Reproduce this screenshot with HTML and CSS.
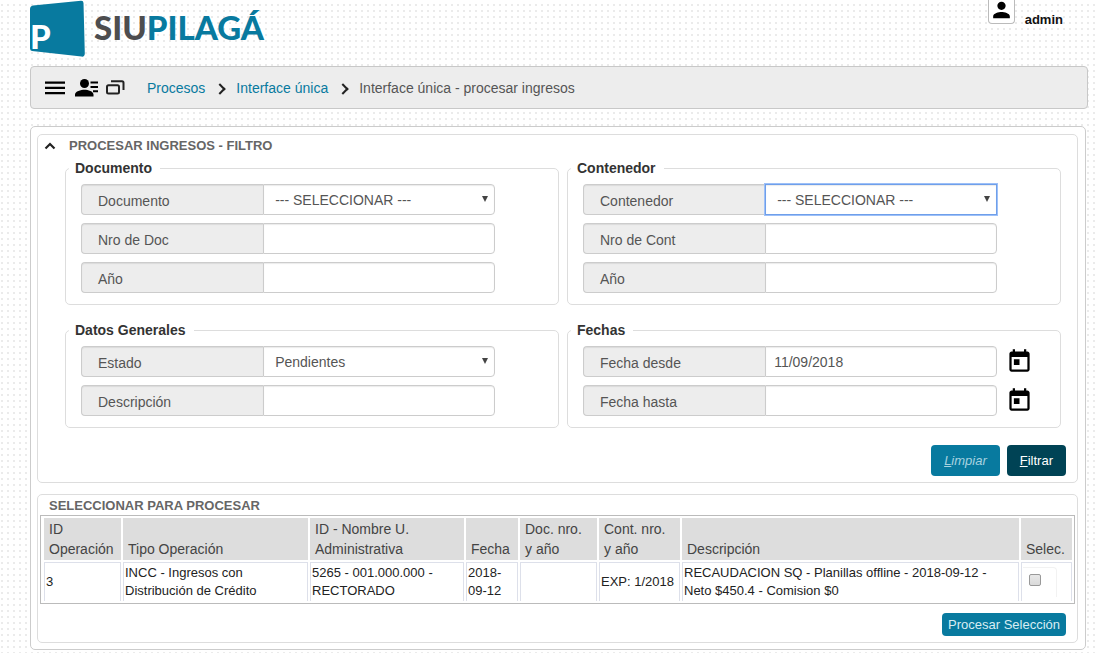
FILE: index.html
```html
<!DOCTYPE html>
<html lang="es">
<head>
<meta charset="utf-8">
<meta name="viewport" content="width=device-width, initial-scale=1">
<title>SIU Pilagá - Procesar ingresos</title>
<link rel="stylesheet" href="styles.css">
</head>
<body>
<header class="header">
  <div class="brand">
    <svg class="brand-mark" viewBox="0 0 56 58" aria-hidden="true">
      <path d="M3 5.5 L51 .7 Q53.5 .6 53.5 3 L54.8 53.5 Q54.8 57 51.500 56.600 L2 51 Q0 50.500 0 48.500 V9 Q0 6 3 5.500Z" fill="#087a9f"/>
      <text class="brand-letter" x="0" y="49">P</text>
    </svg>
    <span class="brand-name">SIU<span class="brand-product">PILAGÁ</span></span>
  </div>
  <div class="user">
    <button class="user-button" type="button" aria-label="Usuario">
      <svg width="26" height="26" viewBox="0 0 24 24"><path d="M12 12c2.210 0 4-1.790 4-4s-1.790-4-4-4-4 1.790-4 4 1.790 4 4 4zm0 2c-2.670 0-8 1.340-8 4v2h16v-2c0-2.660-5.330-4-8-4z"/></svg>
    </button>
    <span class="user-name">admin</span>
  </div>
</header>

<nav class="navbar" aria-label="Principal">
  <div class="tools">
    <button class="tool" type="button" aria-label="Menú">
      <svg width="20" height="20" viewBox="0 0 20 20"><path d="M0 3.500h20v2.300H0zM0 8.800h20v2.300H0zM0 14h20v2.300H0z"/></svg>
    </button>
    <button class="tool" type="button" aria-label="Perfiles">
      <svg width="24" height="20" viewBox="0 0 24 20"><circle cx="9.500" cy="5.500" r="4.500"/><path d="M0 18.500v-2c0-3.300 6-4.800 9.500-4.800s9 1.500 9 4.800v2zM15.500 3.500h7.500v2h-7.500zM15.500 8h7.500v2h-7.500zM18 12.300h5v2h-5z"/></svg>
    </button>
    <button class="tool" type="button" aria-label="Ventanas">
      <svg width="20" height="20" viewBox="0 0 20 20"><path d="M3.500 7.300h9q1.500 0 1.500 1.500v5.200q0 1.500-1.500 1.500h-9Q2 15.500 2 14v-5.200q0-1.500 1.500-1.500zM6 3.300h11q1.500 0 1.500 1.500V12" fill="none" stroke="#222" stroke-width="2"/></svg>
    </button>
  </div>
  <ol class="crumbs">
    <li class="crumb"><a class="crumb-link" href="#procesos">Procesos</a></li>
    <li class="crumb"><a class="crumb-link" href="#interface">Interface única</a></li>
    <li class="crumb" aria-current="page">Interface única - procesar ingresos</li>
  </ol>
</nav>

<main class="content">
  <form class="panel filter">
    <div class="panel-head">
      <button class="collapse" type="button" aria-label="Contraer filtro">
        <svg width="12" height="12" viewBox="0 0 12 12"><path d="M1.500 8.500 6 4l4.500 4.500" fill="none" stroke="#222" stroke-width="2.200"/></svg>
      </button>
      <h1 class="panel-title">PROCESAR INGRESOS - FILTRO</h1>
    </div>
    <div class="groups">
      <fieldset class="group">
        <legend class="legend">Documento</legend>
        <div class="rows">
          <div class="row"><div class="field"><label class="label" for="doc">Documento</label><select class="control select" id="doc"><option>--- SELECCIONAR ---</option></select></div></div>
          <div class="row"><div class="field"><label class="label" for="doc-nro">Nro de Doc</label><input class="control" id="doc-nro" type="text"></div></div>
          <div class="row"><div class="field"><label class="label" for="doc-anio">Año</label><input class="control" id="doc-anio" type="text"></div></div>
        </div>
      </fieldset>
      <fieldset class="group">
        <legend class="legend">Contenedor</legend>
        <div class="rows">
          <div class="row"><div class="field"><label class="label" for="cont">Contenedor</label><select class="control select is-active" id="cont"><option>--- SELECCIONAR ---</option></select></div></div>
          <div class="row"><div class="field"><label class="label" for="cont-nro">Nro de Cont</label><input class="control" id="cont-nro" type="text"></div></div>
          <div class="row"><div class="field"><label class="label" for="cont-anio">Año</label><input class="control" id="cont-anio" type="text"></div></div>
        </div>
      </fieldset>
      <fieldset class="group">
        <legend class="legend">Datos Generales</legend>
        <div class="rows">
          <div class="row"><div class="field"><label class="label" for="estado">Estado</label><select class="control select" id="estado"><option>Pendientes</option></select></div></div>
          <div class="row"><div class="field"><label class="label" for="desc">Descripción</label><input class="control" id="desc" type="text"></div></div>
        </div>
      </fieldset>
      <fieldset class="group">
        <legend class="legend">Fechas</legend>
        <div class="rows">
          <div class="row">
            <div class="field"><label class="label" for="desde">Fecha desde</label><input class="control" id="desde" type="text" value="11/09/2018"></div>
            <button class="calendar" type="button" aria-label="Elegir fecha desde"><svg width="27" height="27" viewBox="0 0 24 24"><path d="M19 3h-1V1h-2v2H8V1H6v2H5c-1.110 0-1.990.9-1.990 2L3 19c0 1.100.89 2 2 2h14c1.100 0 2-.9 2-2V5c0-1.100-.9-2-2-2zm0 16H5V8h14v11zM7 10h5v5H7z"/></svg></button>
          </div>
          <div class="row">
            <div class="field"><label class="label" for="hasta">Fecha hasta</label><input class="control" id="hasta" type="text"></div>
            <button class="calendar" type="button" aria-label="Elegir fecha hasta"><svg width="27" height="27" viewBox="0 0 24 24"><path d="M19 3h-1V1h-2v2H8V1H6v2H5c-1.110 0-1.990.9-1.990 2L3 19c0 1.100.89 2 2 2h14c1.100 0 2-.9 2-2V5c0-1.100-.9-2-2-2zm0 16H5V8h14v11zM7 10h5v5H7z"/></svg></button>
          </div>
        </div>
      </fieldset>
    </div>
    <div class="actions">
      <button class="button button-clear" type="reset"><u>L</u>impiar</button>
      <button class="button button-filter" type="button"><u>F</u>iltrar</button>
    </div>
  </form>

  <section class="panel results">
    <h2 class="panel-title results-title">SELECCIONAR PARA PROCESAR</h2>
    <table class="table">
      <colgroup>
        <col class="col-id"><col class="col-tipo"><col class="col-unidad"><col class="col-fecha"><col class="col-doc"><col class="col-cont"><col><col class="col-sel">
      </colgroup>
      <thead>
        <tr><th>ID Operación</th><th>Tipo Operación</th><th>ID - Nombre U. Administrativa</th><th>Fecha</th><th>Doc. nro. y año</th><th>Cont. nro. y año</th><th>Descripción</th><th>Selec.</th></tr>
      </thead>
      <tbody>
        <tr>
          <td>3</td>
          <td>INCC - Ingresos con Distribución de Crédito</td>
          <td>5265 - 001.000.000 - RECTORADO</td>
          <td>2018-09-12</td>
          <td></td>
          <td>EXP: 1/2018</td>
          <td>RECAUDACION SQ - Planillas offline - 2018-09-12 - Neto $450.4 - Comision $0</td>
          <td><label class="pick"><input class="check" type="checkbox" aria-label="Seleccionar operación 3"></label></td>
        </tr>
      </tbody>
    </table>
    <div class="actions">
      <button class="button button-process" type="button">Procesar Selección</button>
    </div>
  </section>
</main>
</body>
</html>
```
FILE: styles.css
```css
* { box-sizing: border-box; }

body {
  margin: 0;
  padding: 0 8px 3px 30px;
  color: #555;
  font: 14px/20px "Liberation Sans", Arial, sans-serif;
  background: #fff conic-gradient(from 90deg at 4px 4px, #ebebeb 25%, transparent 0) -3px 0 / 6px 6px;
}

button {
  margin: 0;
  padding: 0;
  border: 0;
  background: none;
  font: inherit;
  cursor: pointer;
}

svg { display: block; }

/* Header */
.header {
  display: flex;
  justify-content: space-between;
  align-items: flex-start;
  height: 66px;
}
.brand { display: flex; gap: 8px; }
.brand-mark { width: 56px; height: 58px; }
.brand-letter { font: 900 33px Lato, sans-serif; fill: #fff; }
.brand-name {
  padding-top: 9px;
  color: #4d4d4f;
  font: 900 33px/36px Lato, sans-serif;
}
.brand-product { color: #087a9f; }
.user { display: flex; gap: 10px; padding-right: 25px; }
.user-button {
  display: flex;
  justify-content: center;
  align-items: flex-end;
  width: 27px;
  height: 24px;
  border: 1px solid #bbb;
  border-top: 0;
  border-radius: 0 0 4px 4px;
  background: #fff;
}
.user-name { padding-top: 10px; color: #111; font-size: 13px; font-weight: bold; }

/* Navigation bar */
.navbar {
  display: flex;
  align-items: center;
  gap: 22px;
  min-height: 43px;
  padding: 0 14px;
  border: 1px solid #c8c8c8;
  border-radius: 4px;
  background: #ededed;
}
.tools { display: flex; align-items: center; gap: 8px; }
.tool + .tool { margin-left: 2px; }
.tool:last-child { margin-left: -2px; }
.crumbs { display: flex; margin: 0; padding: 0; list-style: none; }
.crumb { display: flex; align-items: center; }
.crumb-link { color: #087a9f; text-decoration: none; }
.crumb + .crumb::before {
  content: "";
  width: 6px;
  height: 6px;
  margin: 2px 12px 0 11px;
  border: solid #222;
  border-width: 2px 2px 0 0;
  transform: rotate(45deg);
}

/* Panels */
.content {
  margin: 17px 2px 0 0;
  padding: 7px 7px 6px 6px;
  border: 1px solid #ccc;
  border-radius: 5px;
  background: #fff;
}
.panel { border: 1px solid #ddd; border-radius: 5px; }
.panel-title { margin: 0; color: #666; font-size: 13px; line-height: 20px; }
.filter { padding: 0 16px 6px 27px; }
.panel-head {
  display: flex;
  align-items: center;
  gap: 13px;
  height: 24px;
  margin-left: -21px;
  padding-bottom: 3px;
}

/* Filter fields */
.groups { display: grid; grid-template-columns: 1fr 1fr; gap: 16px 8px; }
.group {
  min-width: 0;
  margin: 0;
  padding: 7px 15px 11px;
  border: 1px solid #ddd;
  border-radius: 5px;
}
.legend { margin-left: -12px; padding: 0 8px 0 6px; color: #333; font-weight: bold; line-height: 18px; }
.rows { display: grid; gap: 8px; }
.row { display: grid; grid-template-columns: 1fr 39px; gap: 9px; align-items: center; }
.field { display: flex; height: 31px; }
.label, .control { border: 1px solid #ccc; box-shadow: inset 0 1px 1px rgba(0, 0, 0, .08); }
.label {
  flex: 0 0 44%;
  padding: 1px 16px 0;
  border-right: 0;
  border-radius: 4px 0 0 4px;
  background: #ededed;
  line-height: 30px;
}
.control {
  flex: 1;
  min-width: 0;
  padding: 0 8px;
  border-radius: 0 4px 4px 0;
  background-color: #fff;
  color: #555;
  font: inherit;
}
.select {
  padding: 0 11px;
  appearance: none;
  background-image: url("data:image/svg+xml,%3Csvg xmlns='http://www.w3.org/2000/svg' viewBox='0 0 6 6'%3E%3Cpath d='M0 0h6L3 6z' fill='%23444'/%3E%3C/svg%3E");
  background-repeat: no-repeat;
  background-position: right 6px top 11px;
  background-size: 6px 6px;
}
.is-active { border-color: #6f9fea; outline: 1px solid #9dc0f8; border-radius: 0; }
.calendar { width: 27px; height: 27px; }

/* Buttons */
.actions { display: flex; justify-content: flex-end; gap: 7px; }
.filter .actions { margin: 17px -5px 0 0; }
.button { border-radius: 4px; color: #fff; font-size: 13px; }
.button-clear, .button-filter { height: 31px; padding: 0 13px; }
.button-clear { background: #087a9f; color: #a9d3e0; font-style: italic; }
.button-filter { background: #004355; }
.button-process { height: 23px; padding: 0 6px; background: #087a9f; color: #d8edf3; }

/* Results */
.results { margin-top: 11px; padding: 0 2px 6px; }
.results-title { height: 20px; padding: 0 9px; line-height: 22px; }
.results .actions { margin: 9px 9px 0 0; }
.table {
  width: 100%;
  padding: 0 0 0 1px;
  border: 1px solid #bbb;
  border-spacing: 2px;
  table-layout: fixed;
}
.table th {
  height: 42px;
  padding: 1px 5px;
  background: #ddd;
  color: #444;
  font-weight: normal;
  text-align: left;
  vertical-align: bottom;
}
.table td {
  height: 39px;
  padding: 0 1px;
  border: solid #dde0ea;
  border-width: 1px 1px 0;
  color: #222;
  font-size: 13px;
  line-height: 18px;
}
.col-id { width: 77px; }
.col-tipo { width: 185px; }
.col-unidad { width: 154px; }
.col-fecha { width: 52px; }
.col-doc { width: 77px; }
.col-cont { width: 81px; }
.col-sel { width: 51px; }
.pick {
  display: block;
  width: 34px;
  height: 30px;
  padding: 6px;
  border: solid #f2f2f2;
  border-width: 1px 1px 0 0;
  border-radius: 0 4px 0 0;
}
.check {
  display: block;
  width: 12px;
  height: 12px;
  margin: 0;
  border: 1px solid #999;
  border-radius: 2px;
  appearance: none;
  background: linear-gradient(#e8e8e8, #dadada);
}
.check:checked { background: #087a9f; }
```
